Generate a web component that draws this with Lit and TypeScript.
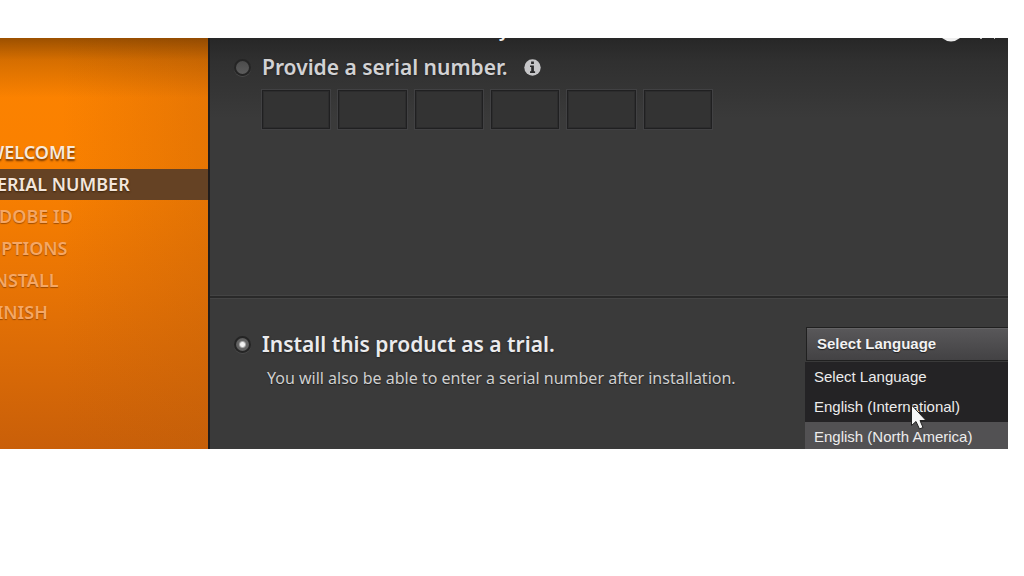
import { LitElement, html, css } from "lit";
import { customElement, state } from "lit/decorators.js";
import { classMap } from "lit/directives/class-map.js";

const STEPS = ["WELCOME", "SERIAL NUMBER", "ADOBE ID", "OPTIONS", "INSTALL", "FINISH"];
const LANGUAGES = ["Select Language", "English (International)", "English (North America)"];

@customElement("step-list")
class StepList extends LitElement {
  static properties = { current: { type: Number } };
  declare current: number;

  static styles = css`
    :host {
      display: block;
      overflow: hidden;
      padding-top: 99px;
      border-right: 2px solid #1f1c1c;
      background:
        linear-gradient(180deg, rgba(60, 30, 0, 0.5) 0, rgba(90, 45, 0, 0.24) 22px, rgba(120, 60, 0, 0) 60px),
        linear-gradient(90deg, rgba(200, 100, 10, 0) 30%, rgba(190, 95, 10, 0.32) 100%),
        linear-gradient(180deg, #fd8300 0, #f98000 35%, #e87404 60%, #c95f09 100%);
    }
    .steps {
      list-style: none;
      margin: 0 0 0 -13px;
      padding: 0;
      display: grid;
      gap: 1px;
    }
    .step {
      font: 600 18px/31px "Noto Sans", "Open Sans", sans-serif;
      white-space: nowrap;
      color: #f5a765;
      text-shadow: 0 1px 1px rgba(110, 50, 0, 0.6);
    }
    .done {
      color: #f8e9dc;
      text-shadow: 0 2px 2px rgba(80, 35, 0, 0.8);
    }
    .current {
      color: #f3e6dc;
      background: #654224;
      text-shadow: 0 1px 2px #3a2208;
    }
  `;

  render() {
    return html`<ol class="steps">
      ${STEPS.map(
        (name, i) => html`<li
          class=${classMap({ step: true, done: i < this.current, current: i === this.current })}
          aria-current=${i === this.current ? "step" : "false"}
        >${name}</li>`
      )}
    </ol>`;
  }
}

@customElement("language-picker")
class LanguagePicker extends LitElement {
  @state() private hovered = 2;

  static styles = css`
    :host {
      display: block;
      position: relative;
      font-family: "Liberation Sans", Arial, sans-serif;
    }
    .box {
      display: block;
      box-sizing: border-box;
      width: 100%;
      height: 34px;
      padding: 0 10px;
      appearance: none;
      border: 1px solid #202020;
      border-right: 0;
      border-radius: 0;
      background: linear-gradient(#59585a, #434244);
      box-shadow: inset 0 1px #656466;
      color: #f2f2f2;
      font: bold 15px/20px "Liberation Sans", Arial, sans-serif;
      text-shadow: 0 1px 1px #222;
    }
    .menu {
      position: absolute;
      top: 35px;
      left: -1px;
      right: 0;
      margin: 0;
      padding: 0;
      list-style: none;
      background: #242325;
    }
    .option {
      padding-left: 9px;
      font-size: 15px;
      line-height: 30px;
      white-space: nowrap;
      color: #ececec;
    }
    .hovered {
      background: #525153;
    }
    .pointer {
      position: absolute;
      left: 104px;
      top: 77px;
      width: 18px;
      height: 28px;
    }
  `;

  render() {
    return html`
      <select class="box" aria-label="Language">
        ${LANGUAGES.map((name) => html`<option>${name}</option>`)}
      </select>
      <ul class="menu" role="listbox" aria-label="Languages">
        ${LANGUAGES.map(
          (name, i) => html`<li
            role="option"
            class=${classMap({ option: true, hovered: i === this.hovered })}
            @mouseenter=${() => (this.hovered = i)}
          >${name}</li>`
        )}
      </ul>
      <svg class="pointer" viewBox="0 0 18 28" aria-hidden="true">
        <path d="M1.5 1V21.5L6 17.5L9.5 25L13 23.5L10 16.5H16Z" fill="#f6f6f6" stroke="#222" stroke-width="1" stroke-linejoin="round" />
      </svg>
    `;
  }
}

@customElement("app-root")
class AppRoot extends LitElement {
  @state() private mode: "serial" | "trial" = "trial";

  static styles = css`
    :host {
      display: block;
      min-height: 100vh;
      box-sizing: border-box;
      padding: 38px 16px 0 0;
      background: #fff;
      font-family: "Noto Sans", "Open Sans", sans-serif;
    }
    .installer {
      position: relative;
      display: grid;
      grid-template-columns: 210px 1fr;
      overflow: hidden;
      background: linear-gradient(#272727 0, #303030 24px, #3a3a3a 80px, #3a3a3a 100%);
    }
    .serial {
      box-sizing: border-box;
      min-height: 258px;
      padding: 14px 24px 0;
      border-bottom: 1px solid #444;
    }
    .trial {
      box-sizing: border-box;
      min-height: 153px;
      display: grid;
      grid-template-columns: 1fr 202px;
      border-top: 2px solid #292929;
      box-shadow: inset 0 1px #444;
      padding: 29px 0 0 24px;
    }
    .trial-text {
      padding-top: 2px;
    }
    .choice {
      display: flex;
      align-items: center;
      gap: 11px;
      font-size: 21px;
      line-height: 30px;
      font-weight: 600;
      color: #d2d2d4;
      text-shadow: 0 1px 2px #222;
    }
    .trial .choice {
      color: #ebebed;
    }
    .radio {
      appearance: none;
      box-sizing: border-box;
      flex: none;
      width: 17px;
      height: 17px;
      margin: 0;
      border: 2px solid #252525;
      border-radius: 50%;
      background: linear-gradient(#4c4c4c, #5c5c5c);
      box-shadow: 0 1px #4a4a4a;
    }
    .radio:checked {
      background: radial-gradient(circle, #f4f4f4 0, #f0f0f0 2px, #666 4px, #555 100%);
    }
    .info {
      width: 17px;
      height: 17px;
      margin-left: 5px;
      flex: none;
    }
    .keys {
      display: grid;
      grid-template-columns: repeat(6, 1fr);
      gap: 8px;
      max-width: 450px;
      margin: 8px 0 0 28px;
    }
    .key {
      box-sizing: border-box;
      width: 100%;
      min-width: 0;
      height: 39px;
      border: 1px solid #202021;
      border-radius: 0;
      background: #333;
      box-shadow: 0 0 0 1px #414143, inset 0 0 0 1px #2c2c2d;
      color: #ddd;
      font: 16px/20px "Noto Sans", sans-serif;
      text-align: center;
    }
    .note {
      margin: 7px 0 0 33px;
      font-size: 16px;
      line-height: 24px;
      color: #d0d0d0;
      text-shadow: 0 1px 1px #1c1c1c;
    }
    .heading-tail {
      position: absolute;
      left: 499px;
      top: -20px;
      font-size: 18px;
      line-height: 24px;
      font-weight: 600;
      color: #eee;
    }
    .controls {
      position: absolute;
      right: 0;
      top: 0;
      width: 70px;
      height: 5px;
    }
  `;

  render() {
    return html`
      <main class="installer">
        <step-list .current=${1}></step-list>
        <div>
          <section class="serial">
            <div class="choice">
              <input class="radio" type="radio" name="mode" id="serial"
                .checked=${this.mode === "serial"} @change=${() => (this.mode = "serial")} />
              <label for="serial">Provide a serial number.</label>
              <svg class="info" viewBox="0 0 17 17" role="img" aria-label="Information">
                <circle cx="8.5" cy="8.5" r="8.2" fill="#c6c6c8" />
                <path d="M7.1 2.4h2.8v2.5H7.1zM6 6.4h3.9v5.9h1.2v1.6H6v-1.6h1.2V8H6z" fill="#29292a" />
              </svg>
            </div>
            <div class="keys">
              ${[1, 2, 3, 4, 5, 6].map(
                (n) => html`<input class="key" type="text" maxlength="4" aria-label="Serial number part ${n}" />`
              )}
            </div>
          </section>
          <section class="trial">
            <div class="trial-text">
              <div class="choice">
                <input class="radio" type="radio" name="mode" id="trial"
                  .checked=${this.mode === "trial"} @change=${() => (this.mode = "trial")} />
                <label for="trial">Install this product as a trial.</label>
              </div>
              <p class="note">You will also be able to enter a serial number after installation.</p>
            </div>
            <language-picker></language-picker>
          </section>
        </div>
        <span class="heading-tail" aria-hidden="true">y</span>
        <svg class="controls" viewBox="0 0 70 5" aria-hidden="true">
          <path d="M4 0H22Q13 7 4 0Z" fill="#eee" />
          <path d="M42 0h2v1h-2zM56 0h1v1h-1z" fill="#bbb" />
        </svg>
      </main>
    `;
  }
}
